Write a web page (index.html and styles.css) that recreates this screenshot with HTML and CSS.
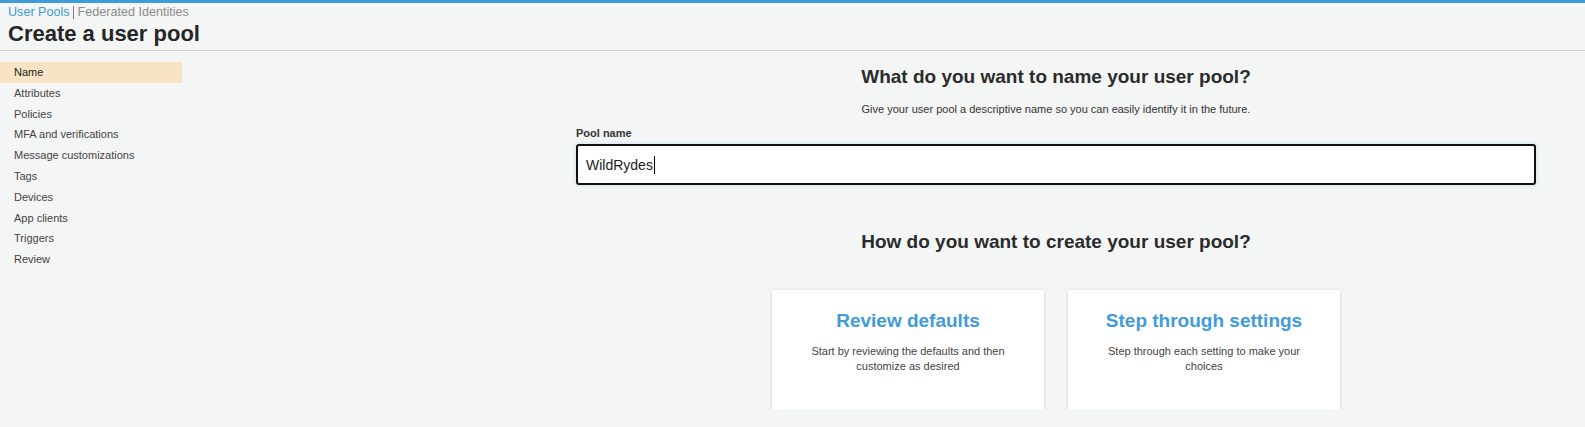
FILE: index.html
```html
<!DOCTYPE html>
<html lang="en">
<head>
<meta charset="utf-8">
<title>Create a user pool</title>
<link rel="stylesheet" href="styles.css">
</head>
<body>
<div class="topbar"></div>
<header class="header">
  <nav class="crumbs">
    <a class="crumb active" href="#">User Pools</a><a class="crumb other" href="#">Federated Identities</a>
  </nav>
  <h1 class="title">Create a user pool</h1>
</header>
<div class="layout">
  <ul class="sidenav">
    <li class="navitem current">Name</li>
    <li class="navitem">Attributes</li>
    <li class="navitem">Policies</li>
    <li class="navitem">MFA and verifications</li>
    <li class="navitem">Message customizations</li>
    <li class="navitem">Tags</li>
    <li class="navitem">Devices</li>
    <li class="navitem">App clients</li>
    <li class="navitem">Triggers</li>
    <li class="navitem">Review</li>
  </ul>
  <main class="main">
    <section class="panel">
      <h2 class="heading">What do you want to name your user pool?</h2>
      <p class="subtitle">Give your user pool a descriptive name so you can easily identify it in the future.</p>
      <label class="label">Pool name</label>
      <div class="input"><span class="value">WildRydes</span><span class="caret"></span></div>
      <h2 class="heading second">How do you want to create your user pool?</h2>
      <div class="cards">
        <div class="card">
          <div class="card-title">Review defaults</div>
          <p class="card-text">Start by reviewing the defaults and then customize as desired</p>
        </div>
        <div class="card">
          <div class="card-title">Step through settings</div>
          <p class="card-text">Step through each setting to make your choices</p>
        </div>
      </div>
    </section>
  </main>
</div>
</body>
</html>
```
FILE: styles.css
```css
* { box-sizing: border-box; }
html, body {
  margin: 0;
  padding: 0;
  background: #f4f5f5;
  font-family: "Liberation Sans", Arial, sans-serif;
  color: #444;
  overflow: hidden;
}
.topbar {
  height: 3px;
  background: #3f9bda;
}
.header {
  padding: 2px 8px 3px;
  border-bottom: 1px solid #cfcfcf;
}
.crumbs {
  display: flex;
  align-items: center;
  height: 15px;
  font-size: 12.6px;
  line-height: 15px;
}
.crumb {
  text-decoration: none;
}
.crumb.active {
  color: #3f9bda;
  padding-right: 3px;
}
.crumb.other {
  color: #8c8c8c;
  border-left: 1px solid #7a7a7a;
  padding-left: 4px;
  line-height: 13px;
}
.title {
  margin: 1px 0 0;
  font-size: 22px;
  line-height: 26px;
  font-weight: bold;
  color: #262626;
}
.layout {
  display: flex;
  align-items: flex-start;
}
.sidenav {
  list-style: none;
  margin: 11px 0 0;
  padding: 0;
  width: 182px;
  flex: none;
}
.navitem {
  height: 20.8px;
  line-height: 20.8px;
  padding-left: 14px;
  font-size: 11px;
  color: #444;
}
.navitem.current {
  background: #f8e4c5;
  color: #222;
}
.main {
  flex: 1;
  display: flex;
  justify-content: flex-end;
  padding-right: 49px;
}
.panel {
  width: 960px;
  padding-top: 15px;
  display: flex;
  flex-direction: column;
}
.heading {
  margin: 0;
  text-align: center;
  font-size: 19px;
  line-height: 22px;
  font-weight: bold;
  color: #2b2b2b;
}
.subtitle {
  margin: 14px 0 0;
  text-align: center;
  font-size: 11px;
  line-height: 15px;
  color: #333;
}
.label {
  margin-top: 9px;
  font-size: 11px;
  line-height: 15px;
  font-weight: bold;
  color: #333;
}
.input {
  margin-top: 3px;
  height: 41px;
  background: #fff;
  border: 2px solid #111;
  border-radius: 3px;
  box-shadow: 0 0 3px 1px rgba(63, 155, 218, 0.18);
  display: flex;
  align-items: center;
  padding-left: 8px;
  font-size: 14px;
  color: #222;
}
.caret {
  display: inline-block;
  width: 1px;
  height: 18px;
  background: #000;
  margin-left: 1px;
}
.heading.second {
  margin-top: 46px;
}
.cards {
  margin-top: 37px;
  display: flex;
  justify-content: center;
  gap: 24px;
}
.card {
  width: 272px;
  height: 119px;
  background: #fff;
  box-shadow: 0 1px 3px rgba(0, 0, 0, 0.2);
  padding: 20px 30px 0;
  text-align: center;
}
.card-title {
  font-size: 19px;
  line-height: 22px;
  font-weight: bold;
  color: #3f9bda;
}
.card-text {
  margin: 12px 0 0;
  font-size: 11px;
  line-height: 15px;
  color: #444;
}
```
